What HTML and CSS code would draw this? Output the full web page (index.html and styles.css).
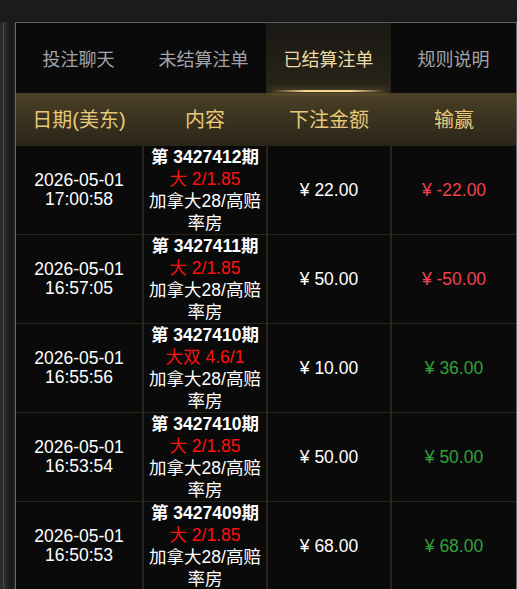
FILE: index.html
```html
<!DOCTYPE html>
<html lang="zh-CN">
<head>
<meta charset="utf-8">
<title>已结算注单</title>
<link rel="stylesheet" href="styles.css">
</head>
<body>
<div class="topbar"></div>
<div class="main">
  <div class="rail"></div>
  <div class="panel">
    <nav class="tabs">
      <div class="tab">投注聊天</div>
      <div class="tab">未结算注单</div>
      <div class="tab active">已结算注单</div>
      <div class="tab">规则说明</div>
    </nav>
    <div class="table">
      <div class="thead">
        <div class="th">日期(美东)</div>
        <div class="th">内容</div>
        <div class="th">下注金额</div>
        <div class="th">输赢</div>
      </div>
      <div class="row">
        <div class="cell date"><span>2026-05-01</span><span>17:00:58</span></div>
        <div class="cell content"><b>第 3427412期</b><span class="pick">大 2/1.85</span><span class="room">加拿大28/高赔率房</span></div>
        <div class="cell money">¥ 22.00</div>
        <div class="cell money loss">¥ -22.00</div>
      </div>
      <div class="row">
        <div class="cell date"><span>2026-05-01</span><span>16:57:05</span></div>
        <div class="cell content"><b>第 3427411期</b><span class="pick">大 2/1.85</span><span class="room">加拿大28/高赔率房</span></div>
        <div class="cell money">¥ 50.00</div>
        <div class="cell money loss">¥ -50.00</div>
      </div>
      <div class="row">
        <div class="cell date"><span>2026-05-01</span><span>16:55:56</span></div>
        <div class="cell content"><b>第 3427410期</b><span class="pick">大双 4.6/1</span><span class="room">加拿大28/高赔率房</span></div>
        <div class="cell money">¥ 10.00</div>
        <div class="cell money win">¥ 36.00</div>
      </div>
      <div class="row">
        <div class="cell date"><span>2026-05-01</span><span>16:53:54</span></div>
        <div class="cell content"><b>第 3427410期</b><span class="pick">大 2/1.85</span><span class="room">加拿大28/高赔率房</span></div>
        <div class="cell money">¥ 50.00</div>
        <div class="cell money win">¥ 50.00</div>
      </div>
      <div class="row">
        <div class="cell date"><span>2026-05-01</span><span>16:50:53</span></div>
        <div class="cell content"><b>第 3427409期</b><span class="pick">大 2/1.85</span><span class="room">加拿大28/高赔率房</span></div>
        <div class="cell money">¥ 68.00</div>
        <div class="cell money win">¥ 68.00</div>
      </div>
    </div>
  </div>
</div>
</body>
</html>
```

FILE: styles.css
```css
html, body {
  margin: 0;
  padding: 0;
  height: 100%;
  overflow: hidden;
}
body {
  background: #1c1c1c;
  font-family: "Liberation Sans", "Noto Sans CJK SC", sans-serif;
  color: #fff;
}
.topbar {
  height: 22px;
  background: linear-gradient(#1d1d1d, #1a1a1a);
}
.main {
  display: flex;
  height: 567px;
}
.rail {
  width: 15px;
  flex: none;
  background: linear-gradient(to right, #2a2a2a 0 3px, #4a4a4a 3px 4px, #303030 4px, #1a1a1a 10px, #161616 12px, #262626 15px);
}
.panel {
  flex: 1;
  border-left: 1px solid #6a6a6a;
  border-right: 1px solid #6a6a6a;
  border-top: 1px solid #5e5e5e;
  background: #0a0a0a;
  overflow: hidden;
}
.tabs {
  display: grid;
  grid-template-columns: repeat(4, 1fr);
  height: 70px;
  background: #0a0a0a;
}
.tab {
  display: flex;
  align-items: center;
  justify-content: center;
  font-size: 18px;
  color: #a2a4a8;
  position: relative;
}
.tab.active {
  color: #ecdba4;
  background: linear-gradient(#1a1814, #292519);
}
.tab.active::after {
  content: "";
  position: absolute;
  left: 4px;
  right: 4px;
  bottom: 1px;
  height: 2px;
  background: linear-gradient(to right, rgba(245, 215, 140, 0), #f6d68c 30%, #f8dc98 50%, #f6d68c 70%, rgba(245, 215, 140, 0));
  box-shadow: 0 0 6px rgba(240, 200, 120, 0.5);
}
.table {
  display: grid;
  row-gap: 2px;
  background: #2a2519;
}
.thead {
  display: grid;
  grid-template-columns: 126px 122px 122px 124px;
  column-gap: 2px;
  height: 51px;
  background: linear-gradient(#4b4026, #2c261a);
}
.th {
  display: flex;
  align-items: center;
  justify-content: center;
  font-size: 20px;
  color: #e6c878;
}
.row {
  display: grid;
  grid-template-columns: 126px 122px 122px 124px;
  column-gap: 2px;
  height: 87px;
}
.cell {
  background: #0a0a0a;
  display: flex;
  align-items: center;
  justify-content: center;
  text-align: center;
  font-size: 17.5px;
}
.date {
  flex-direction: column;
  line-height: 19.5px;
}
.content {
  flex-direction: column;
  line-height: 22px;
}
.content b {
  font-weight: 700;
}
.content span {
  display: block;
}
.pick {
  color: #ff1010;
}
.loss {
  color: #f2414f;
}
.win {
  color: #32a03a;
}
```
